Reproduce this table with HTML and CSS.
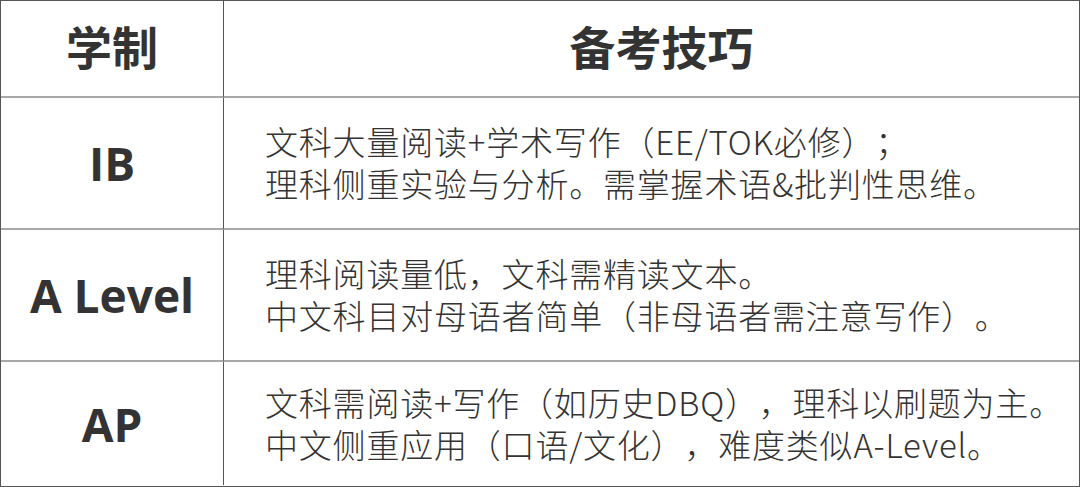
FILE: index.html
```html
<!DOCTYPE html>
<html lang="zh-CN">
<head>
<meta charset="utf-8">
<link rel="stylesheet" href="styles.css">
</head>
<body>
<div class="table">
  <div class="cell head key">学制</div>
  <div class="cell head tip">备考技巧</div>

  <div class="cell key latin">IB</div>
  <div class="cell body">
    <div class="line">文科大量阅读+学术写作（EE/TOK必修）；</div>
    <div class="line">理科侧重实验与分析。需掌握术语&amp;批判性思维。</div>
  </div>

  <div class="cell key latin">A Level</div>
  <div class="cell body">
    <div class="line">理科阅读量低，文科需精读文本。</div>
    <div class="line">中文科目对母语者简单（非母语者需注意写作）。</div>
  </div>

  <div class="cell key latin last">AP</div>
  <div class="cell body last">
    <div class="line">文科需阅读+写作（如历史DBQ），理科以刷题为主。</div>
    <div class="line">中文侧重应用（口语/文化），难度类似A-Level。</div>
  </div>
</div>
</body>
</html>
```
FILE: styles.css
```css
* { box-sizing: border-box; }
html, body { margin: 0; padding: 0; background: #fff; }
body {
  width: 1080px;
  height: 487px;
  font-family: "Noto Sans CJK SC", "Noto Sans", sans-serif;
  color: #333;
}
.table {
  width: 1080px;
  height: 487px;
  border: 1px solid #555;
  display: grid;
  grid-template-columns: 223px 1fr;
  grid-template-rows: 97px 132px 132px 123px;
}
.cell {
  border-bottom: 2px solid #a8a8a8;
  display: flex;
  align-items: center;
}
.cell.last { border-bottom: none; }
.key {
  border-right: 1px solid #555;
  justify-content: center;
}
.head {
  font-size: 46px;
  font-weight: 700;
  color: #333;
  justify-content: center;
  padding-bottom: 8px;
}
.head.tip { padding-left: 20px; }
.latin {
  font-family: "Open Sans", "Noto Sans", sans-serif;
  font-weight: 700;
  font-size: 46px;
  color: #333;
}
.body {
  flex-direction: column;
  align-items: flex-start;
  justify-content: center;
  padding-left: 41px;
  padding-bottom: 2px;
  font-size: 33px;
  font-weight: 300;
  line-height: 42px;
  letter-spacing: 0.8px;
  color: #333;
  text-spacing-trim: space-all;
  font-feature-settings: "palt" 0, "halt" 0;
}
.line { white-space: nowrap; }
```
